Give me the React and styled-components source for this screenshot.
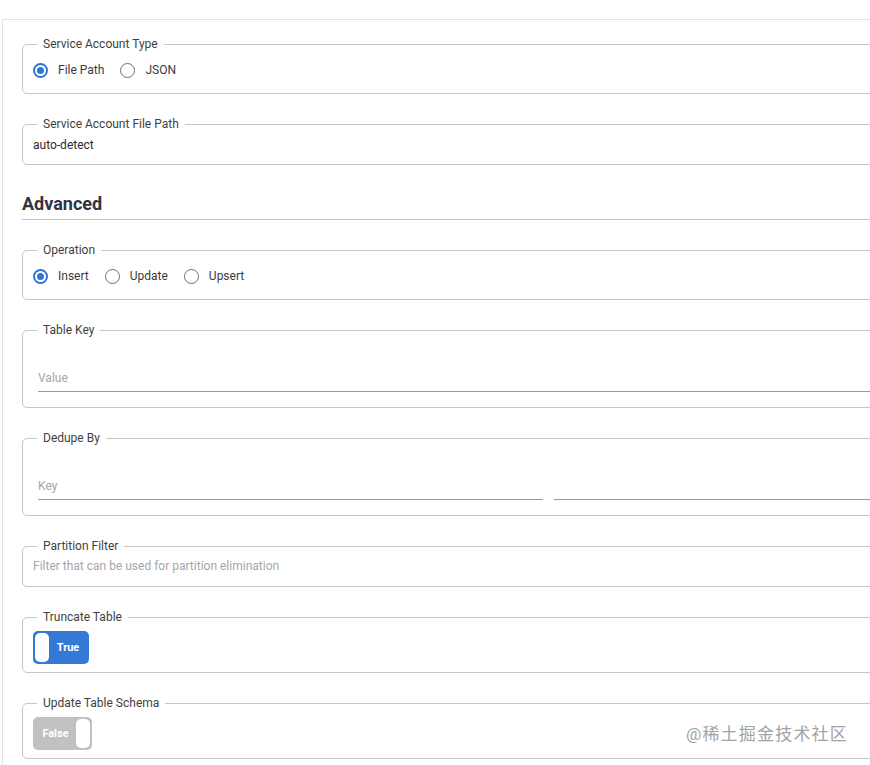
import styled, { createGlobalStyle } from "styled-components";

const GlobalStyle = createGlobalStyle`
  html, body {
    margin: 0;
    background: #fff;
    overflow: hidden;
  }
  body {
    font-family: Roboto, "Liberation Sans", "Noto Sans CJK SC", sans-serif;
    color: #3b3b3b;
  }
`;

const Page = styled.div`
  position: relative;
  height: 765px;
  padding-top: 19px;
  box-sizing: border-box;
`;

const Panel = styled.div`
  margin-left: 2px;
  height: 100%;
  padding: 17px 0 0 19px;
  box-sizing: border-box;
  border-top: 1px solid #e3e3e3;
  border-left: 1px solid #e3e3e3;
`;

const Field = styled.fieldset`
  width: 1048px;
  margin: 0 0 23px;
  padding: 0 10px ${({ $pb }) => $pb ?? 13}px;
  border: 1px solid #c6c6c6;
  border-radius: 5px;
  box-sizing: border-box;
`;

const Legend = styled.legend`
  margin-left: 4px;
  padding: 0 6px;
  font-size: 12px;
  line-height: 15px;
  color: #3f3f3f;
`;

const RadioGroup = styled.div`
  display: flex;
  align-items: center;
  gap: 16px;
  margin-top: 8px;
  height: 20px;
`;

const RadioItem = styled.label`
  display: flex;
  align-items: center;
  gap: 10px;
  font-size: 12px;
  color: #3b3b3b;
`;

const RadioCircle = styled.span`
  width: 15px;
  height: 15px;
  box-sizing: border-box;
  border-radius: 50%;
  border: ${({ $checked }) => ($checked ? "2px solid #2f74d8" : "1.5px solid #6e6e6e")};
  display: flex;
  align-items: center;
  justify-content: center;

  &::after {
    content: "";
    display: ${({ $checked }) => ($checked ? "block" : "none")};
    width: 7px;
    height: 7px;
    border-radius: 50%;
    background: #2f74d8;
  }
`;

const PlainText = styled.div`
  margin-top: ${({ $mt }) => $mt ?? 6}px;
  font-size: 12px;
  line-height: 14px;
  color: ${({ $placeholder }) => ($placeholder ? "#a6a6a6" : "#2b2b2b")};
`;

const Heading = styled.h2`
  width: 1048px;
  margin: 28px 0 23px;
  padding-bottom: 4px;
  font-size: 18px;
  line-height: 22px;
  font-weight: 700;
  color: #2f3441;
  border-bottom: 1px solid #c4c4c4;
`;

const InputRow = styled.div`
  display: grid;
  grid-template-columns: ${({ $cols }) => `repeat(${$cols}, 1fr)`};
  gap: 11px;
  margin: 33px 0 0 5px;
`;

const UnderlineInput = styled.div`
  padding-bottom: 6px;
  font-size: 12px;
  line-height: 14px;
  min-height: 14px;
  color: #a6a6a6;
  border-bottom: 1px solid #9a9a9a;
`;

const Toggle = styled.div`
  display: flex;
  flex-direction: ${({ $on }) => ($on ? "row" : "row-reverse")};
  align-items: center;
  width: ${({ $on }) => ($on ? 56 : 59)}px;
  height: 33px;
  margin-top: 6px;
  padding: 2px;
  box-sizing: border-box;
  border-radius: 5px;
  background: ${({ $on }) => ($on ? "#3479d6" : "#c1c1c1")};
`;

const Knob = styled.span`
  width: 14px;
  height: 29px;
  border-radius: 5px;
  background: #fff;
  flex: none;
`;

const ToggleText = styled.span`
  flex: 1;
  text-align: center;
  font-size: 11px;
  font-weight: 700;
  color: #fff;
`;

const Watermark = styled.div`
  position: absolute;
  right: 22px;
  bottom: 20px;
  font-size: 17px;
  letter-spacing: 1.2px;
  color: #a3a3a3;
`;

function RadioField({ label, options, value }) {
  return (
    <Field>
      <Legend>{label}</Legend>
      <RadioGroup>
        {options.map((o) => (
          <RadioItem key={o}>
            <RadioCircle $checked={o === value} />
            {o}
          </RadioItem>
        ))}
      </RadioGroup>
    </Field>
  );
}

function ToggleField({ label, on }) {
  return (
    <Field $pb={8}>
      <Legend>{label}</Legend>
      <Toggle $on={on}>
        <Knob />
        <ToggleText>{on ? "True" : "False"}</ToggleText>
      </Toggle>
    </Field>
  );
}

export default function App() {
  return (
    <Page>
      <GlobalStyle />
      <Panel>
        <RadioField label="Service Account Type" options={["File Path", "JSON"]} value="File Path" />
        <Field $pb={12}>
          <Legend>Service Account File Path</Legend>
          <PlainText>auto-detect</PlainText>
        </Field>

        <Heading>Advanced</Heading>

        <RadioField label="Operation" options={["Insert", "Update", "Upsert"]} value="Insert" />
        <Field $pb={15}>
          <Legend>Table Key</Legend>
          <InputRow $cols={1}>
            <UnderlineInput>Value</UnderlineInput>
          </InputRow>
        </Field>
        <Field $pb={15}>
          <Legend>Dedupe By</Legend>
          <InputRow $cols={2}>
            <UnderlineInput>Key</UnderlineInput>
            <UnderlineInput />
          </InputRow>
        </Field>
        <Field $pb={13}>
          <Legend>Partition Filter</Legend>
          <PlainText $mt={5} $placeholder>
            Filter that can be used for partition elimination
          </PlainText>
        </Field>
        <ToggleField label="Truncate Table" on />
        <ToggleField label="Update Table Schema" on={false} />
      </Panel>
      <Watermark>@稀土掘金技术社区</Watermark>
    </Page>
  );
}
